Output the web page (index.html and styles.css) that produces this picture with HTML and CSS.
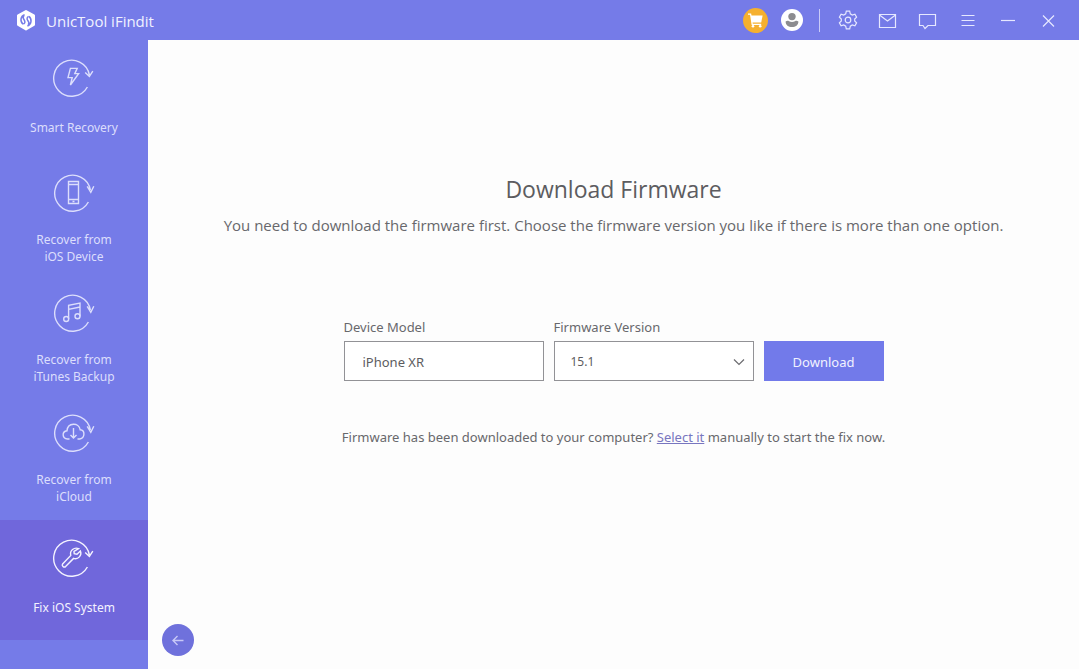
FILE: index.html
```html
<!DOCTYPE html>
<html lang="en">
<head>
<meta charset="utf-8">
<title>UnicTool iFindit</title>
<link rel="stylesheet" href="styles.css">
</head>
<body>
<div class="app">
  <header class="titlebar">
    <svg class="logo" viewBox="0 0 20 22" aria-hidden="true">
      <path d="M10 2.2 17.8 6.6V15.8L10 20.2 2.2 15.8V6.6Z" fill="#fff" stroke="#fff" stroke-width="2.4" stroke-linejoin="round"/>
      <path d="M8.6 5.8C4.4 7.2 3.8 12.4 7 15.2M7.8 6.8C6.6 8.4 7.2 9.8 8.2 11 9.4 12.6 9 14.4 7.4 15.2" fill="none" stroke="#757be8" stroke-width="1.5"/>
      <path d="M11.4 17C15.6 15.6 16.2 10.2 13 7.4M12.2 16C13.4 14.4 12.8 12.8 11.8 11.6 10.6 10 11 8.2 12.6 7.4" fill="none" stroke="#757be8" stroke-width="1.5"/>
    </svg>
    <span class="app-name">UnicTool iFindit</span>
    <nav class="tools" aria-label="Window tools">
      <button class="tool tool-cart" aria-label="Store">
        <svg class="badge" viewBox="0 0 25 25"><circle cx="12.5" cy="12.5" r="12.5" fill="#f5b02f"/><path d="M5 6.2H7.6L9.2 16.4H18.2" fill="none" stroke="#fff" stroke-width="1.3"/><path d="M7.8 7.6H19.6L18.2 14.6H9Z" fill="#fff"/><circle cx="10" cy="18.2" r="1.3" fill="#fff"/><circle cx="17.2" cy="18.2" r="1.3" fill="#fff"/></svg>
      </button>
      <button class="tool tool-user" aria-label="Account">
        <svg class="avatar" viewBox="0 0 22 22"><circle cx="11" cy="11" r="11" fill="#fff"/><circle cx="11" cy="7.6" r="3.7" fill="#8c8c90"/><path d="M4.6 12.4C6 11.6 7 11.6 8 12.2 10 13.2 12 13.2 14 12.2 15 11.6 16 11.6 17.4 12.4 17.4 16 14.6 18 11 18S4.6 16 4.6 12.4Z" fill="#8c8c90"/></svg>
      </button>
      <span class="divider"></span>
      <button class="tool" aria-label="Settings">
        <svg class="glyph" viewBox="0 0 20 20"><path d="M8.3 1.2H11.7L12.3 3.8 14.3 5 16.9 4.2 18.6 7.1 16.7 9V11L18.6 12.9 16.9 15.8 14.3 15 12.3 16.2 11.7 18.8H8.3L7.7 16.2 5.7 15 3.1 15.8 1.4 12.9 3.3 11V9L1.4 7.1 3.1 4.2 5.7 5 7.7 3.8Z"/><circle cx="10" cy="10" r="2.8"/></svg>
      </button>
      <button class="tool" aria-label="Mail">
        <svg class="glyph" viewBox="0 0 20 20"><path d="M1.5 4.5H17.5V17.5H1.5ZM1.5 5 9.5 11 17.5 5"/></svg>
      </button>
      <button class="tool" aria-label="Feedback">
        <svg class="glyph" viewBox="0 0 20 20"><path d="M1.5 4.5H17.5V15.5H10L7 18.5 5 15.5H1.5Z"/></svg>
      </button>
      <button class="tool" aria-label="Menu">
        <svg class="glyph" viewBox="0 0 20 20"><path d="M3.5 5.5H16.5M3.5 10.5H16.5M3.5 15.5H16.5"/></svg>
      </button>
      <button class="tool" aria-label="Minimize">
        <svg class="glyph" viewBox="0 0 20 20"><path d="M3 10.5H17"/></svg>
      </button>
      <button class="tool" aria-label="Close">
        <svg class="glyph" viewBox="0 0 20 20"><path d="M5 5.5 16 16.5M16 5.5 5 16.5"/></svg>
      </button>
    </nav>
  </header>
  <div class="body">
    <nav class="sidebar" aria-label="Recovery modes">
      <a class="mode mode-short" href="#smart">
        <svg class="mode-icon" viewBox="0 0 44 40"><path d="M35.4 29A18 18 0 1 1 37.4 17M33.2 14.4 37.4 18.4 40.8 13.2"/><path d="M18.4 10.4H25.2L22.8 15.6H26.6L18.4 27 20.2 19.6H16Z"/></svg>
        <span>Smart Recovery</span>
      </a>
      <a class="mode" href="#device">
        <svg class="mode-icon" viewBox="-1 0 44 40"><path d="M35.4 29A18 18 0 1 1 37.4 17M34.2 13.4 37.8 19.4 40.8 13.2"/><path d="M15.5 8.5H25.5V30.5H15.5ZM15.5 11.5H25.5M15.5 26.5H25.5M19.5 28.5H21.5"/></svg>
        <span>Recover from<br>iOS Device</span>
      </a>
      <a class="mode" href="#itunes">
        <svg class="mode-icon" viewBox="-1 0 44 40"><path d="M35.4 29A18 18 0 1 1 37.4 17M34.2 13.4 37.8 19.4 40.8 13.2"/><path d="M15.6 26V12.4L27 10V23.4M15.6 16.4 27 14"/><circle cx="13.2" cy="26" r="2.5"/><circle cx="24.5" cy="23.2" r="2.5"/></svg>
        <span>Recover from<br>iTunes Backup</span>
      </a>
      <a class="mode" href="#icloud">
        <svg class="mode-icon" viewBox="-1 0 44 40"><path d="M35.4 29A18 18 0 1 1 37.4 17M34.2 13.4 37.8 19.4 40.8 13.2"/><path d="M16.5 26H14.5C9 25.6 8.6 18.6 14 17.8 14.6 9.4 26 9.2 27.2 16.8 32.4 17.2 32 25.4 26.8 26H24.5M20.5 15V25M17.5 22 20.5 25 23.5 22"/></svg>
        <span>Recover from<br>iCloud</span>
      </a>
      <a class="mode mode-short mode-active" href="#fix" aria-current="page">
        <svg class="mode-icon" viewBox="0 0 44 40"><path d="M35.4 29A18 18 0 1 1 37.4 17M33.2 14.4 37.4 18.4 40.8 13.2"/><path d="M26.6 10.6C22.2 8.8 17.4 12.6 18.8 17.4L10.6 26C9.4 27.6 11.8 30 13.6 28.6L21.6 20.4C26.2 21.8 30.2 17.4 28.4 13L25 16.2 22.2 15.6 22 13.4Z"/></svg>
        <span>Fix iOS System</span>
      </a>
    </nav>
    <main class="main">
      <section class="content">
        <h1 class="title">Download Firmware</h1>
        <p class="subtitle">You need to download the firmware first. Choose the firmware version you like if there is more than one option.</p>
        <form class="form">
          <div class="field">
            <label for="model">Device Model</label>
            <input class="control" id="model" type="text" value="iPhone XR">
          </div>
          <div class="field">
            <label for="version">Firmware Version</label>
            <div class="select-wrap">
              <select class="control control-select" id="version"><option>15.1</option></select>
              <svg class="chevron" viewBox="0 0 12 8" aria-hidden="true"><path d="M1 1.5 6 6.5 11 1.5"/></svg>
            </div>
          </div>
          <button class="download" type="button">Download</button>
        </form>
        <p class="hint">Firmware has been downloaded to your computer? <a class="link" href="#select">Select it</a> manually to start the fix now.</p>
      </section>
      <button class="back" aria-label="Back">
        <svg class="back-icon" viewBox="0 0 12 12"><path d="M11.5 6.5H1M5.5 2 1 6.5 5.5 11"/></svg>
      </button>
    </main>
  </div>
</div>
</body>
</html>
```
FILE: styles.css
```css
* { box-sizing: border-box; }
body {
  margin: 0;
  font-family: "Noto Sans", "Open Sans", sans-serif;
  font-size: 13px;
  color: #68686c;
  background: #fdfdfd;
}
button { padding: 0; border: 0; background: none; font: inherit; cursor: pointer; }
svg { display: block; fill: none; }
.app { display: flex; flex-direction: column; min-height: 100vh; }

.titlebar {
  display: flex;
  align-items: center;
  height: 40px;
  padding: 0 11px 0 16px;
  background: #757be8;
  color: #f1f2ff;
}
.logo { width: 20px; height: 22px; }
.app-name { margin-left: 10px; padding-top: 2px; font-family: "Open Sans", sans-serif; font-size: 15px; }
.tools { display: flex; align-items: center; margin-left: auto; }
.tool { display: flex; align-items: center; justify-content: center; width: 40px; height: 40px; }
.tool-cart { width: 34px; }
.badge { width: 25px; height: 25px; }
.avatar { width: 22px; height: 22px; }
.divider { width: 1px; height: 23px; margin: 0 8px 0 7px; background: #c9cbf8; }
.glyph { width: 20px; height: 20px; stroke: #e6e8ff; stroke-width: 1.2; }

.body { display: flex; flex: 1; }
.sidebar { flex: none; width: 148px; background: #757be8; }
.mode {
  display: flex;
  flex-direction: column;
  align-items: center;
  gap: 18px;
  height: 120px;
  padding-top: 13px;
  color: #dcdefc;
  font-size: 12px;
  line-height: 17px;
  text-align: center;
  text-decoration: none;
}
.mode-short { padding-top: 18px; gap: 21px; }
.mode-active { background: #7067db; color: #f4f3ff; }
.mode-icon { width: 44px; height: 40px; stroke: currentColor; stroke-width: 1.4; }

.main { display: flex; flex: 1; flex-direction: column; padding: 0 14px 13px; }
.content { display: flex; flex: 1; flex-direction: column; align-items: center; padding-top: 131px; }
.title { margin: 0; font-family: "Open Sans", sans-serif; font-size: 23px; font-weight: 400; line-height: 36px; color: #5c5c60; }
.subtitle { margin: 8px 0 0; font-family: "Open Sans", sans-serif; font-size: 15px; line-height: 20px; text-align: center; }
.form { display: flex; align-items: flex-end; gap: 10px; margin-top: 83px; }
.field { display: flex; flex-direction: column; gap: 5px; line-height: 18px; }
.control {
  width: 200px;
  height: 40px;
  padding: 2px 18px 0;
  border: 1px solid #929296;
  border-radius: 0;
  background: #fff;
  color: #5c5c60;
  font: inherit;
}
.control-select { padding-left: 16px; appearance: none; font-size: 12px; }
.select-wrap { position: relative; }
.chevron {
  position: absolute;
  top: 17px;
  right: 9px;
  width: 12px;
  height: 8px;
  stroke: #6c6c70;
  stroke-width: 1.2;
  pointer-events: none;
}
.download { width: 120px; height: 40px; padding-top: 2px; background: #727aea; color: #f1f2ff; }
.hint { margin: 46px 0 0; line-height: 20px; text-align: center; }
.link { color: #7876c0; }
.back {
  display: flex;
  align-items: center;
  justify-content: center;
  width: 32px;
  height: 32px;
  border-radius: 50%;
  background: #6f71dc;
}
.back-icon { width: 12px; height: 12px; stroke: #c8c8f6; stroke-width: 1.4; }
```
